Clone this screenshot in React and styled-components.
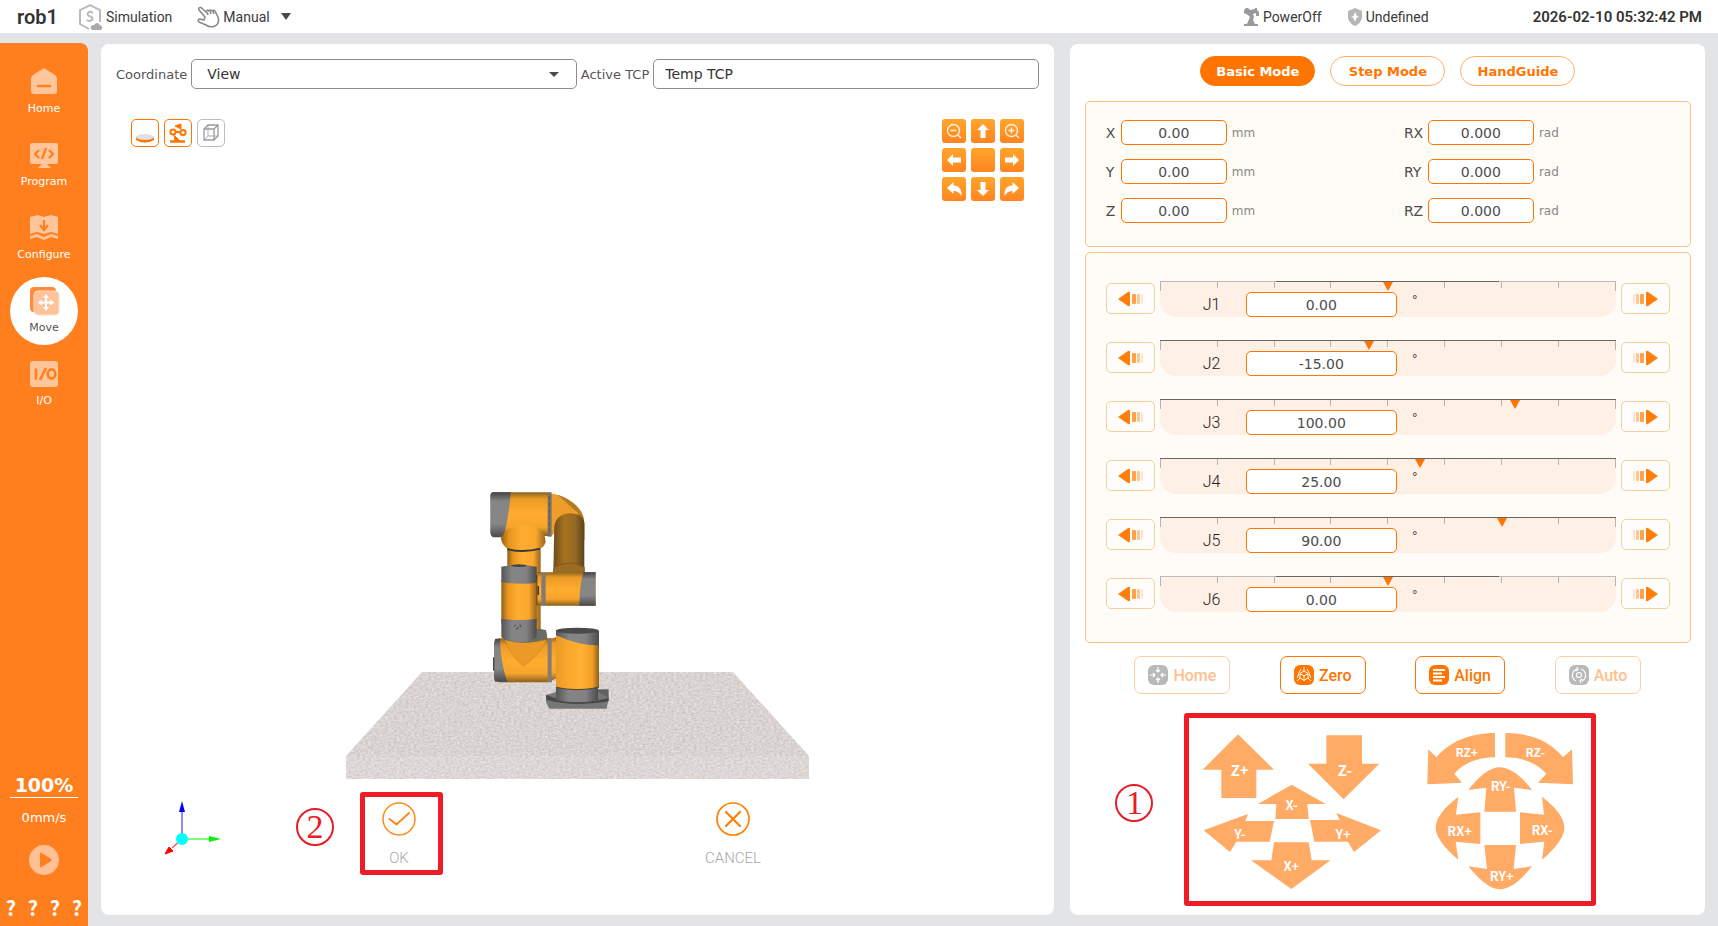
import React from "react";
import styled, { createGlobalStyle, css } from "styled-components";

const GlobalStyle = createGlobalStyle`
  * {
    box-sizing: border-box;
  }
  body {
    margin: 0;
    background-color: #e3e4e6;
    font-family: "DejaVu Sans", sans-serif;
    color: #4d4d4d;
  }
  button, input, select {
    font-family: inherit;
    margin: 0;
  }
  button {
    cursor: pointer;
  }
  svg {
    display: block;
  }
`;

const Page = styled.div`
  min-height: 100vh;
  display: flex;
  flex-direction: column;
  gap: 10px;
`;

/* top bar */

const TopBar = styled.header`
  height: 33px;
  flex-shrink: 0;
  background-color: white;
  display: flex;
  align-items: center;
  padding: 0 16px;
  font-family: Roboto, sans-serif;
  font-size: 14px;
  color: #3a3a3a;
`;

const RobotName = styled.h1`
  margin: 0 20px 0 1px;
  font-size: 20px;
  line-height: 24px;
  font-weight: 600;
  color: #333;
`;

const Status = styled.div`
  display: flex;
  align-items: center;
  gap: ${(p) => p.$gap || 3}px;
  margin-right: ${(p) => p.$after || 0}px;
`;

const ModeButton = styled.button`
  border: none;
  background: none;
  padding: 0;
  display: flex;
  align-items: center;
  gap: 3px;
  font-size: 14px;
  color: inherit;
`;

const ModeArrow = styled.span`
  margin-left: 8px;
  border: 5px solid transparent;
  border-top: 7px solid #4a4a4a;
  border-bottom: none;
`;

const StatusGroup = styled.div`
  display: flex;
  align-items: center;
  margin-left: auto;
`;

const Clock = styled.time`
  font-size: 15px;
  font-weight: 600;
  color: #333;
`;

/* side bar */

const Body = styled.div`
  flex: 1;
  display: flex;
`;

const SideBar = styled.aside`
  width: 88px;
  flex-shrink: 0;
  background-color: #ff7f1e;
  border-top-right-radius: 8px;
  padding: 15px 0 6px;
  display: flex;
  flex-direction: column;
  align-items: center;
  color: white;
`;

const Nav = styled.nav`
  display: flex;
  flex-direction: column;
  gap: 5px;
`;

const NavItem = styled.a`
  width: 68px;
  height: 68px;
  border-radius: 50%;
  padding-top: 10px;
  display: flex;
  flex-direction: column;
  align-items: center;
  gap: 6px;
  font-size: 11px;
  line-height: 16px;
  color: ${(p) => (p.$active ? "#555" : "white")};
  background-color: ${(p) => (p.$active ? "white" : "transparent")};
  text-decoration: none;
`;

const Speed = styled.div`
  width: 68px;
  margin-top: auto;
  border-bottom: 1px solid white;
  font-size: 19px;
  line-height: 24px;
  font-weight: bold;
  text-align: center;
`;

const Velocity = styled.div`
  margin-top: 10px;
  font-size: 13px;
  line-height: 20px;
`;

const PlayButton = styled.button`
  margin: 17px 0 21px;
  border: none;
  padding: 0;
  background: none;
`;

const Marks = styled.div`
  align-self: stretch;
  display: flex;
  justify-content: space-around;
  font-family: "Noto Sans CJK SC", sans-serif;
  font-size: 20px;
  line-height: 24px;
  font-weight: bold;
`;

/* panels */

const Main = styled.main`
  flex: 1;
  display: grid;
  grid-template-columns: 3fr 2fr;
  gap: 16px;
  padding: 1px 13px 11px;
`;

const Panel = styled.section`
  background-color: white;
  border-radius: 8px;
  display: flex;
  flex-direction: column;
  min-width: 0;
  padding: ${(p) => p.$pad};
`;

const FieldRow = styled.div`
  display: flex;
  align-items: center;
  gap: 4px;
  font-size: 13px;
  color: #555;
`;

const fieldBox = css`
  display: block;
  width: 100%;
  height: 30px;
  border: 1px solid #8e8e8e;
  border-radius: 5px;
  background-color: white;
  font-size: 14px;
  color: #333;
`;

const FieldWrap = styled.div`
  flex: 1;
  position: relative;
`;

const Select = styled.select`
  ${fieldBox}
  appearance: none;
  padding: 0 15px;
`;

const SelectArrow = styled.span`
  position: absolute;
  right: 18px;
  top: 13px;
  border: 5px solid transparent;
  border-top-color: #4a4a4a;
  border-bottom: none;
  pointer-events: none;
`;

const TextField = styled.input`
  ${fieldBox}
  padding: 0 11px;
`;

const ToolRow = styled.div`
  display: flex;
  justify-content: space-between;
  align-items: flex-start;
  padding: 30px 15px 0;
`;

const ViewTools = styled.div`
  display: flex;
  gap: 5px;
`;

const ViewTool = styled.button`
  width: 28px;
  height: 28px;
  padding: 0;
  display: grid;
  place-items: center;
  background-color: white;
  border: 1px solid ${(p) => (p.$on ? "#ff7500" : "#bdbdbd")};
  border-radius: 5px;
`;

const CameraPad = styled.div`
  display: grid;
  grid-template-columns: repeat(3, 24px);
  grid-auto-rows: 24px;
  gap: 5px;
`;

const CameraButton = styled.button`
  padding: 0;
  border: none;
  border-radius: 3px;
  background: linear-gradient(#ffa62b, #ff8420);
  display: grid;
  place-items: center;
`;

const Scene = styled.div`
  flex: 1;
  display: flex;
  align-items: flex-end;
  justify-content: center;
`;

const ConfirmRow = styled.div`
  display: flex;
  align-items: center;
  margin-top: 13px;
  padding-left: 48px;
`;

const Triad = styled.div`
  margin: 0 74px 12px 0;
`;

const StepNumber = styled.span`
  width: 38px;
  height: 38px;
  flex-shrink: 0;
  margin: 0 ${(p) => p.$after}px 14px 0;
  border: 2px solid #e81c24;
  border-radius: 50%;
  display: flex;
  justify-content: center;
  align-items: center;
  font-family: "Liberation Serif", serif;
  font-size: 34px;
  line-height: 34px;
  color: #e81c24;
`;

const Highlight = styled.div`
  border: 5px solid #ee1c25;
  border-radius: 3px;
  margin-right: ${(p) => p.$after || 0}px;
`;

const ConfirmButton = styled.button`
  width: 73px;
  height: 73px;
  border: none;
  padding: 5px 5px 0 0;
  background: none;
  display: flex;
  flex-direction: column;
  align-items: center;
  gap: 12px;
  font-family: Roboto, sans-serif;
  font-weight: 300;
  font-size: 15px;
  line-height: 20px;
  color: #a8a8a8;
`;

/* motion panel */

const Tabs = styled.div`
  display: flex;
  justify-content: center;
  gap: 15px;
`;

const Tab = styled.button`
  width: 115px;
  height: 30px;
  padding: 0;
  border: 1px solid ${(p) => (p.$active ? "#ff7500" : "#ffae69")};
  border-radius: 15px;
  background-color: ${(p) => (p.$active ? "#ff7500" : "white")};
  color: ${(p) => (p.$active ? "white" : "#ff7500")};
  font-size: 13px;
  font-weight: bold;
`;

const Card = styled.div`
  background-color: #fffbf7;
  border: 1px solid #ffc08a;
  border-radius: 5px;
  margin-top: ${(p) => p.$top}px;
  padding: ${(p) => p.$pad};
`;

const PoseGrid = styled.div`
  display: grid;
  grid-template-columns: 1fr 1fr;
  gap: 14px 12px;
`;

const PoseField = styled.label`
  display: flex;
  align-items: center;
  gap: 5px;
  font-size: 14px;
`;

const AxisName = styled.span`
  width: ${(p) => (p.$wide ? 19 : 10)}px;
`;

const Value = styled.input`
  width: ${(p) => p.$width}px;
  height: 25px;
  padding: 0;
  border: 1px solid #ff7500;
  border-radius: 5px;
  background-color: white;
  text-align: center;
  font-size: 14px;
  color: #4d4d4d;
`;

const Unit = styled.span`
  font-size: 12px;
  color: #888;
`;

const Joints = styled.div`
  display: flex;
  flex-direction: column;
  gap: 23px;
`;

const JointRow = styled.div`
  display: flex;
  gap: 5px;
`;

const JogStep = styled.button`
  width: 49px;
  height: 31px;
  margin-top: 2px;
  padding: 0;
  display: grid;
  place-items: center;
  border: 1px solid #f5cfa0;
  border-radius: 5px;
  background-color: #fffdfb;
`;

const Track = styled.div`
  flex: 1;
  height: 36px;
  position: relative;
  display: flex;
  align-items: flex-end;
  border-top: 1px solid #bcbcbc;
  border-radius: 0 0 16px 16px;
  background-color: #fff0e6;
`;

const Range = styled.span`
  position: absolute;
  top: -1px;
  height: 1px;
  background-color: #666;
`;

const Tick = styled.span`
  position: absolute;
  top: 0;
  width: 1px;
  height: ${(p) => (p.$end ? 9 : 6)}px;
  background-color: #b4b4b4;
`;

const Pointer = styled.span`
  position: absolute;
  top: 0;
  margin-left: -5px;
  border: 5px solid transparent;
  border-top: 9px solid #ff7500;
  border-bottom: none;
`;

const JointName = styled.label`
  width: 86px;
  padding-left: 43px;
  font-family: Roboto, sans-serif;
  font-size: 16px;
  font-weight: 300;
  line-height: 24px;
  color: #222;
`;

const Degree = styled.span`
  align-self: center;
  margin-left: 15px;
  font-size: 12px;
`;

const Actions = styled.div`
  display: flex;
  justify-content: space-evenly;
  margin-top: 13px;
`;

const ActionButton = styled.button`
  height: 38px;
  padding: 0 13px;
  display: flex;
  align-items: center;
  gap: 5px;
  border: 1px solid #ff7500;
  border-radius: 7px;
  background-color: white;
  color: #ff7500;
  font-family: Roboto, sans-serif;
  font-size: 16px;
  font-weight: 500;
  &:disabled {
    border-color: #ffcba0;
    color: #ffc08e;
  }
`;

const JogArea = styled.div`
  display: flex;
  align-items: center;
  justify-content: center;
  margin-top: 19px;
  padding-right: 64px;
`;

const JogPad = styled.div`
  position: relative;
  width: 402px;
  height: 183px;
`;

const JogArrow = styled.button`
  position: absolute;
  left: ${(p) => p.$box[0]}px;
  top: ${(p) => p.$box[1]}px;
  width: ${(p) => p.$box[2]}px;
  height: ${(p) => p.$box[3]}px;
  padding: 0;
  border: none;
  background: none;
  svg {
    overflow: visible;
  }
  path {
    fill: #ffab66;
  }
  text {
    fill: white;
    font-family: "Noto Sans CJK SC", sans-serif;
    font-weight: bold;
    text-anchor: middle;
  }
`;

const navItems = [
  {
    name: "Home",
    icon: (
      <>
        <path d="M13 0L24 7Q26 9 26 11V23Q26 26 23 26H3Q0 26 0 23V11Q0 9 2 7Z" fill="#ffc59b" />
        <path d="M7 18H19" stroke="#ff7f1e" strokeWidth="2.4" strokeLinecap="round" />
      </>
    ),
  },
  {
    name: "Program",
    icon: (
      <>
        <path d="M2 2H25Q27 2 27 4V21Q27 23 25 23H16L20 27H7L11 23H1Q-1 23 -1 21V4Q-1 2 2 2Z" fill="#ffc59b" />
        <path d="M8 9L4 13L8 17M18 9L22 13L18 17M15 7L11 18" fill="none" stroke="#ff7f1e" strokeWidth="2.2" />
      </>
    ),
  },
  {
    name: "Configure",
    icon: (
      <>
        <path d="M-1 3L7 1L13 3L20 1L27 3V20L20 18L13 20L6 18L-1 20ZM-1 22L6 20L13 23L20 20L27 22V25L20 23L13 26L6 23L-1 25Z" fill="#ffc59b" />
        <path d="M13 6V15M9 11L13 16L17 11" fill="none" stroke="#ff7f1e" strokeWidth="2.2" />
      </>
    ),
  },
  {
    name: "Move",
    icon: (
      <>
        <rect x="-1" y="0" width="26" height="25" rx="4" fill="#ff8c3a" />
        <rect x="3" y="4" width="25" height="24" rx="4" fill="#ffc39a" stroke="#ffe0cb" />
        <path d="M15 9V22M8 15.500H22" stroke="white" strokeWidth="2" />
        <path d="M15 7L18 11H12ZM15 24L18 20H12ZM7 15.500L11 12.500V18.500ZM23.500 15.500L19 12.500V18.500Z" fill="white" />
      </>
    ),
  },
  {
    name: "I/O",
    icon: (
      <>
        <rect x="-1" y="1" width="28" height="26" rx="3" fill="#ffc59b" />
        <path d="M5 8.500V19.500M9 20L15 8" stroke="#ff7f1e" strokeWidth="2.6" />
        <ellipse cx="20.500" cy="14" rx="3.800" ry="4.600" fill="none" stroke="#ff7f1e" strokeWidth="2.6" />
      </>
    ),
  },
];

const straight = "M12 5L18 11H14.5V19H9.500V11H6Z";
const curved = "M5 11L11.500 5V8.500C17 8.500 20 12 19.500 19C17.500 15.500 15 14 11.500 14V17Z";

const zoomGlass = (plus) => (
  <g fill="none" stroke="#fff1df" strokeWidth="1.4">
    <circle cx="11.500" cy="11.500" r="6" />
    <path d={plus ? "M8.500 11.500H14.500M11.500 8.500V14.500M16 16L19 19" : "M8.500 11.500H14.500M16 16L19 19"} />
  </g>
);

const cameraButtons = [
  { name: "Zoom out", icon: zoomGlass(false) },
  { name: "Up", icon: <path d={straight} fill="white" /> },
  { name: "Zoom in", icon: zoomGlass(true) },
  { name: "Left", icon: <path d={straight} fill="white" transform="rotate(-90 12 12)" /> },
  { name: "Center", icon: null },
  { name: "Right", icon: <path d={straight} fill="white" transform="rotate(90 12 12)" /> },
  { name: "Rotate left", icon: <path d={curved} fill="white" /> },
  { name: "Down", icon: <path d={straight} fill="white" transform="rotate(180 12 12)" /> },
  { name: "Rotate right", icon: <path d={curved} fill="white" transform="matrix(-1 0 0 1 24 0)" /> },
];

const pose = [
  { axis: "X", value: "0.00", unit: "mm" },
  { axis: "RX", value: "0.000", unit: "rad" },
  { axis: "Y", value: "0.00", unit: "mm" },
  { axis: "RY", value: "0.000", unit: "rad" },
  { axis: "Z", value: "0.00", unit: "mm" },
  { axis: "RZ", value: "0.000", unit: "rad" },
];

// angle range of the scale is -180..180, limit is the reachable part of it
const joints = [
  { name: "J1", angle: 0, limit: 88 },
  { name: "J2", angle: -15, limit: 180 },
  { name: "J3", angle: 100, limit: 180 },
  { name: "J4", angle: 25, limit: 180 },
  { name: "J5", angle: 90, limit: 180 },
  { name: "J6", angle: 0, limit: 88 },
];

const actions = [
  {
    name: "Home",
    disabled: true,
    icon: <path d="M10 2V7M10 13V18M2 10H7M13 10H18M8 5L10 7L12 5M8 15L10 13L12 15M5 8L7 10L5 12M15 8L13 10L15 12" />,
  },
  {
    name: "Zero",
    icon: <path d="M10 6L14 8.500V13L10 15.500L6 13V8.500ZM6 8.500L10 11L14 8.500M10 11V15.500M10 2V6M6 13L3 16M14 13L17 16M7 4Q4 8 3.500 13M13 4Q16 8 16.500 13" strokeWidth="1" />,
  },
  {
    name: "Align",
    icon: <path d="M4 5H16M4 8.500H13M4 12H16M4 15.500H13" strokeWidth="1.8" />,
  },
  {
    name: "Auto",
    disabled: true,
    icon: <path d="M8 4A6.500 6.500 0 0 0 7 16M12 4A6.500 6.500 0 0 1 13 16M8 2L9 4.500L6.500 6M12 18L11 15.500L13.500 14M10 7.500A2.500 2.500 0 1 0 10 12.500A2.500 2.500 0 1 0 10 7.500" />,
  },
];

const jogArrows = [
  { name: "Z+", box: [13, 16, 73, 65], at: [421, 209], size: 45, d: "M416 102L524 208H471V293H366V208H310Z" },
  { name: "Z-", box: [119, 17, 72, 65], at: [737, 209], size: 45, d: "M681 105H788V190H840L733 297L626 190H681Z" },
  { name: "X-", box: [69, 66, 68, 35], at: [577, 316], size: 39, d: "M577 253L679 311H624L628 356H528L531 311H476Z" },
  { name: "Y-", box: [14, 96, 71, 38], at: [422, 403], size: 39, d: "M313 390L446 341L438 362H524L511 424H411L392 455Z" },
  { name: "Y+", box: [121, 95, 71, 39], at: [731, 401], size: 39, d: "M845 390L711 338L721 359H632L645 424H746L764 455Z" },
  { name: "X+", box: [62, 124, 80, 47], at: [576, 498], size: 39, d: "M524 426H628L637 480H694L576 566L455 480H516Z" },
  { name: "RZ+", box: [238, 15, 68, 52], at: [1102, 157], size: 36, d: "M1187 98V171C1135 171 1090 190 1065 220L1088 247L984 252L987 147L1011 171C1050 125 1110 98 1187 98Z" },
  { name: "RZ-", box: [316, 15, 68, 52], at: [1308, 157], size: 36, d: "M1218 98V171C1270 171 1315 190 1341 220L1316 247L1421 252L1418 147L1391 171C1355 125 1295 98 1218 98Z" },
  { name: "RY-", box: [279, 49, 64, 45], at: [1204, 258], size: 39, d: "M1107 269C1140 225 1175 201 1200 201C1230 201 1265 225 1298 269L1244 262L1250 334H1155L1161 262Z" },
  { name: "RY+", box: [279, 127, 64, 45], at: [1207, 528], size: 39, d: "M1155 434H1250L1243 506L1298 498C1265 540 1230 567 1200 567C1175 567 1140 540 1107 498L1163 506Z" },
  { name: "RX+", box: [246, 78, 46, 64], at: [1081, 393], size: 39, d: "M1077 289L1070 343L1143 336V431L1069 424L1077 478C1030 440 1009 405 1009 384C1009 355 1030 325 1077 289Z" },
  { name: "RX-", box: [331, 78, 45, 64], at: [1328, 391], size: 39, d: "M1328 289L1334 343L1262 336V431L1335 424L1328 478C1375 440 1395 405 1395 384C1395 355 1375 325 1328 289Z" },
];

const RobotScene = () => (
  <svg width="463" height="288" viewBox="346 491 463 288" role="img" aria-label="Robot view">
    <defs>
      <linearGradient id="oh">
        <stop offset="0" stopColor="#8f6016" />
        <stop offset="0.180" stopColor="#e8951f" />
        <stop offset="0.450" stopColor="#ffad30" />
        <stop offset="0.780" stopColor="#fba62c" />
        <stop offset="1" stopColor="#96651a" />
      </linearGradient>
      <linearGradient id="base">
        <stop offset="0" stopColor="#e99a28" />
        <stop offset="0.300" stopColor="#fba82d" />
        <stop offset="0.600" stopColor="#ffb034" />
        <stop offset="0.850" stopColor="#f09d28" />
        <stop offset="1" stopColor="#8a5e1a" />
      </linearGradient>
      <linearGradient id="ov" x2="0" y2="1">
        <stop offset="0" stopColor="#8d6220" />
        <stop offset="0.150" stopColor="#eb9a24" />
        <stop offset="0.500" stopColor="#ffac30" />
        <stop offset="0.800" stopColor="#f7a42c" />
        <stop offset="1" stopColor="#8a5f1e" />
      </linearGradient>
      <linearGradient id="gh">
        <stop offset="0" stopColor="#555" />
        <stop offset="0.300" stopColor="#858585" />
        <stop offset="0.700" stopColor="#828282" />
        <stop offset="1" stopColor="#4c4c4c" />
      </linearGradient>
      <linearGradient id="gv" x2="0" y2="1">
        <stop offset="0" stopColor="#444" />
        <stop offset="0.200" stopColor="#858585" />
        <stop offset="0.700" stopColor="#868686" />
        <stop offset="1" stopColor="#4a4a4a" />
      </linearGradient>
      <linearGradient id="dark">
        <stop offset="0" stopColor="#6b4c1c" />
        <stop offset="0.350" stopColor="#a8721f" />
        <stop offset="0.700" stopColor="#966a21" />
        <stop offset="1" stopColor="#5a431f" />
      </linearGradient>
      <filter id="stone" x="0" y="0" width="1" height="1" colorInterpolationFilters="sRGB">
        <feTurbulence type="fractalNoise" baseFrequency="0.350 0.550" numOctaves="3" seed="4" />
        <feColorMatrix values="0.200 0 0 0 0.750  0.200 0 0 0 0.730  0.200 0 0 0 0.720  0 0 0 0 1" />
        <feComposite in2="SourceGraphic" operator="in" />
      </filter>
    </defs>
    <path d="M422 672H733L809 756V779H346V756Z" fill="#d9d4d1" filter="url(#stone)" />
    <path d="M346 756H809V779H346Z" fill="#fff" opacity="0.100" />
    <g transform="translate(470 480) scale(0.3333)">
      <path d="M112 190H212V470H112Z" fill="url(#oh)" />
      <path d="M240 40C290 46 343 84 343 130V180H256V158L240 170Z" fill="#ee9d2a" />
      <path d="M262 44C310 60 343 90 343 130V180H325V100Z" fill="#b47b25" />
      <path d="M253 140Q258 104 298 100Q340 100 343 130V277H250Z" fill="url(#dark)" />
      <path d="M253 262Q298 236 343 262V277H250Z" fill="#9b6c22" stroke="#6e5024" strokeWidth="2" />
      <path d="M68 37H243V168H68Q62 165 62 158V46Q62 38 68 37Z" fill="url(#ov)" />
      <path d="M68 37H122Q118 105 100 172H68Q61 165 61 158V46Q61 38 68 37Z" fill="url(#gv)" />
      <path d="M233 38H245V170H233Z" fill="#7b746c" />
      <path d="M238 48V166" stroke="#4e4942" strokeWidth="2" strokeDasharray="14 5" />
      <path d="M105 155Q165 120 222 155L227 185Q224 200 207 208Q160 216 115 208Q94 195 93 175Z" fill="url(#oh)" />
      <path d="M112 207Q160 220 210 206" stroke="#3c3a38" strokeWidth="6" fill="none" />
      <path d="M200 277H377V377H200Z" fill="url(#ov)" />
      <path d="M340 277H377V377H328Q328 320 340 277Z" fill="url(#gv)" />
      <path d="M216 278H227V376H214V300Z" fill="#827a71" />
      <path d="M200 285V375M205 318V345" stroke="#3c3326" strokeWidth="4" />
      <path d="M94 300H200V430H94Z" fill="url(#oh)" />
      <path d="M94 260Q147 250 200 260V308Q147 316 94 306Z" fill="url(#gh)" />
      <ellipse cx="147" cy="257" rx="24" ry="4" fill="#444" />
      <path d="M108 482L204 446L228 452L232 480Q170 500 108 482Z" fill="url(#gh)" />
      <path d="M85 475H245V607H85Z" fill="url(#ov)" />
      <path d="M105 480Q170 496 230 480Q200 535 160 557Q130 540 105 480Z" fill="#eb9a27" />
      <path d="M105 482Q130 540 160 557Q195 540 230 482" fill="none" stroke="#a87322" strokeWidth="2" opacity="0.500" />
      <path d="M100 472L204 446L228 450L232 474Q170 500 100 478Z" fill="#6c6a67" />
      <path d="M94 416Q147 424 200 416V470Q190 485 147 487Q102 482 94 470Z" fill="url(#gh)" />
      <path d="M132 440L138 434M150 434L154 442M138 448L146 442" stroke="#444" strokeWidth="3" />
      <path d="M76 476H90Q92 550 112 605H76Q72 600 72 590V488Z" fill="url(#gv)" />
      <path d="M71 532V572" stroke="#444" strokeWidth="4" />
      <path d="M240 478L262 470V594L240 604Z" fill="url(#ov)" />
      <path d="M233 476H245V606H233Z" fill="#857c73" />
      <path d="M380 628H416V656H380Z" fill="#616161" />
      <path d="M228 645L258 636H384L416 654L410 686H238L228 666Z" fill="#767676" />
      <path d="M228 645Q320 680 416 654V664Q320 682 230 660Z" fill="#484848" />
      <path d="M258 615H384V660Q320 674 258 660Z" fill="url(#gh)" />
      <path d="M258 455H387V622Q320 636 258 622Z" fill="url(#base)" />
      <path d="M258 622Q320 636 387 622" fill="none" stroke="#4f4434" strokeWidth="3" />
      <path d="M258 452H387V496Q330 498 258 466Z" fill="url(#gh)" />
      <ellipse cx="322" cy="452" rx="64" ry="9" fill="#4a4a4a" />
    </g>
  </svg>
);

const AxisTriad = () => (
  <svg width="58" height="56" viewBox="164 800 58 56" aria-hidden="true">
    <path d="M182 839V810" stroke="#6a62ff" strokeWidth="1.500" />
    <path d="M182 801L185 812H179Z" fill="#0a00f0" />
    <path d="M182 839H210" stroke="#4cff4c" strokeWidth="1.500" />
    <path d="M221 839L209 836V842Z" fill="#00f500" />
    <path d="M182 839L172 848" stroke="#ff5a5a" strokeWidth="1.500" />
    <path d="M165 854L169 847L173 851Z" fill="#f00" stroke="#f00" />
    <circle cx="182" cy="839" r="6" fill="#00ffff" />
  </svg>
);

const StepIcon = ({ flip }) => (
  <svg width="27" height="16" viewBox="0 0 27 16" aria-hidden="true">
    <g transform={flip ? "matrix(-1 0 0 1 27 0)" : undefined}>
      <path d="M1 8L11 1Q13 0 13 2V14Q13 16 11 15Z" fill="#ff7f0a" />
      <rect x="15" y="3" width="4" height="10" rx="1" fill="#ffa04a" />
      <rect x="20" y="3" width="3" height="10" rx="1" fill="#ffc692" />
      <rect x="24" y="3" width="2" height="10" rx="1" fill="#ffe3ca" />
    </g>
  </svg>
);

const Joint = ({ joint }) => {
  const toPercent = (angle) => ((angle + 180) / 360) * 100;
  return (
    <JointRow>
      <JogStep aria-label={`${joint.name} minus`}>
        <StepIcon />
      </JogStep>
      <Track>
        <Range
          style={{
            left: `${toPercent(-joint.limit)}%`,
            right: `${100 - toPercent(joint.limit)}%`,
          }}
        />
        {[0, 1, 2, 3, 4, 5, 6, 7, 8].map((n) => (
          <Tick key={n} $end={n % 8 === 0} style={{ left: `calc((100% - 1px) * ${n / 8})` }} />
        ))}
        <Pointer style={{ left: `${toPercent(joint.angle)}%` }} />
        <JointName htmlFor={joint.name}>{joint.name}</JointName>
        <Value id={joint.name} $width={151} defaultValue={joint.angle.toFixed(2)} />
        <Degree>°</Degree>
      </Track>
      <JogStep aria-label={`${joint.name} plus`}>
        <StepIcon flip />
      </JogStep>
    </JointRow>
  );
};

const App = () => {
  return (
    <Page>
      <GlobalStyle />
      <TopBar>
        <RobotName>rob1</RobotName>
        <Status $after={25}>
          <svg width="25" height="28" viewBox="0 0 25 28" fill="none" aria-hidden="true">
            <path d="M11 26L2 21V7L12 2L22 7V19" stroke="#bababa" strokeWidth="2" />
            <path d="M15 10Q13 8 11 9Q8 11 11 13Q15 14 14.500 16.500Q12 19 8.500 17" stroke="#bababa" strokeWidth="2" />
            <path d="M13 26Q12 22 16 22Q19 18 22 22Q26 24 23 27H14Z" fill="#a9a9a9" />
          </svg>
          Simulation
        </Status>
        <ModeButton>
          <svg width="23" height="22" viewBox="0 0 23 22" fill="none" stroke="#8a8a8a" strokeWidth="1.600" strokeLinejoin="round" aria-hidden="true">
            <path d="M8 11L2 4Q1 1 4 1.500L9 6Q10 3 12 5Q13 3 15 5Q17 3 18.500 6L21 11Q23 17 18 20Q13 22 9 19L2 16Q0 14 2.500 13L7 14Z" />
            <path d="M10 6L11 9M13 5L14 8M16 5L17 8" />
          </svg>
          Manual
          <ModeArrow />
        </ModeButton>
        <StatusGroup>
          <Status $after={26} $gap={3}>
            <svg width="17" height="18" viewBox="0 0 17 18" aria-hidden="true">
              <path d="M1 16H15V18H1ZM4 16L7 9L5 7L1 5V2L3 0H5L7 2L12 1V0H14V2L16 4V8H13V5L10 6L11 9L10 12L12 16Z" fill="#9a9a9a" />
            </svg>
            PowerOff
          </Status>
          <Status $after={104} $gap={4}>
            <svg width="14" height="18" viewBox="0 0 14 18" aria-hidden="true">
              <path d="M7 0L14 3V10Q13 15 7 18Q1 15 0 10V3Z" fill="#b5b5b5" />
              <path d="M7 4L9 8L11 9L8.500 10L7 14L5.500 10L3 9L5.500 8Z" fill="white" />
            </svg>
            Undefined
          </Status>
          <Clock>2026-02-10 05:32:42 PM</Clock>
        </StatusGroup>
      </TopBar>
      <Body>
        <SideBar>
          <Nav>
            {navItems.map((item) => (
              <NavItem key={item.name} href="#" $active={item.name === "Move"}>
                <svg width="27" height="27" viewBox="0 0 27 27" overflow="visible" aria-hidden="true">
                  {item.icon}
                </svg>
                {item.name}
              </NavItem>
            ))}
          </Nav>
          <Speed>100%</Speed>
          <Velocity>0mm/s</Velocity>
          <PlayButton aria-label="Play">
            <svg width="30" height="30" viewBox="0 0 30 30">
              <circle cx="15" cy="15" r="15" fill="#ffc094" />
              <path d="M11 9Q11 7 13 8L22 14Q23 15 22 16L13 22Q11 23 11 21Z" fill="#ff7f1e" />
            </svg>
          </PlayButton>
          <Marks>
            <span>?</span>
            <span>?</span>
            <span>?</span>
            <span>?</span>
          </Marks>
        </SideBar>
        <Main>
          <Panel $pad="15px 15px 40px">
            <FieldRow>
              <label htmlFor="coordinate">Coordinate</label>
              <FieldWrap>
                <Select id="coordinate" defaultValue="View">
                  <option>View</option>
                </Select>
                <SelectArrow />
              </FieldWrap>
              <label htmlFor="tcp">Active TCP</label>
              <FieldWrap>
                <TextField id="tcp" defaultValue="Temp TCP" />
              </FieldWrap>
            </FieldRow>
            <ToolRow>
              <ViewTools>
                <ViewTool $on aria-label="Table">
                  <svg width="20" height="20" viewBox="0 0 20 20">
                    <path d="M1 14V17Q10 22 19 17V14Z" fill="#ff7500" />
                    <ellipse cx="10" cy="14" rx="9" ry="3" fill="#dfe0e3" />
                  </svg>
                </ViewTool>
                <ViewTool $on aria-label="Robot">
                  <svg width="20" height="20" viewBox="0 0 20 20" fill="none" stroke="#ff7500" strokeWidth="2">
                    <circle cx="5" cy="9" r="2.600" />
                    <circle cx="15" cy="9.500" r="2.600" />
                    <path d="M8 9H12" />
                    <path d="M13 1V6L7 3ZM6 12L12 18H7Z" fill="#ff7500" strokeWidth="1" />
                    <path d="M2 18.500H17" strokeWidth="2.500" />
                  </svg>
                </ViewTool>
                <ViewTool aria-label="Cube">
                  <svg width="18" height="18" viewBox="0 0 18 18" fill="none" stroke="#9b9b9b" strokeWidth="1.300">
                    <path d="M2 5H12V16H2ZM2 5L6 1H16V12L12 16M12 5L16 1" />
                    <path d="M6 1V12H16M2 16L6 12" strokeWidth="0.800" />
                  </svg>
                </ViewTool>
              </ViewTools>
              <CameraPad>
                {cameraButtons.map((b) => (
                  <CameraButton key={b.name} aria-label={b.name}>
                    <svg width="24" height="24" viewBox="0 0 24 24">
                      {b.icon}
                    </svg>
                  </CameraButton>
                ))}
              </CameraPad>
            </ToolRow>
            <Scene>
              <RobotScene />
            </Scene>
            <ConfirmRow>
              <Triad>
                <AxisTriad />
              </Triad>
              <StepNumber $after={26}>2</StepNumber>
              <Highlight $after={256}>
                <ConfirmButton>
                  <svg width="34" height="34" viewBox="0 0 34 34" fill="none" stroke="#ff8a14">
                    <circle cx="17" cy="17" r="16" strokeWidth="1.500" />
                    <path d="M7.500 17L14.500 22.500L27 11" strokeWidth="2" strokeLinecap="round" />
                  </svg>
                  OK
                </ConfirmButton>
              </Highlight>
              <ConfirmButton>
                <svg width="34" height="34" viewBox="0 0 34 34" fill="none" stroke="#ff8000">
                  <circle cx="17" cy="17" r="16" strokeWidth="1.700" />
                  <path d="M10 10L24 24M24 10L10 24" strokeWidth="2.200" strokeLinecap="round" />
                </svg>
                CANCEL
              </ConfirmButton>
            </ConfirmRow>
          </Panel>
          <Panel $pad="12px 14px 9px 15px">
            <Tabs>
              <Tab $active>Basic Mode</Tab>
              <Tab>Step Mode</Tab>
              <Tab>HandGuide</Tab>
            </Tabs>
            <Card $top={15} $pad="18px 0 23px 20px">
              <PoseGrid>
                {pose.map((p) => (
                  <PoseField key={p.axis}>
                    <AxisName $wide={p.axis.length > 1}>{p.axis}</AxisName>
                    <Value $width={106} defaultValue={p.value} />
                    <Unit>{p.unit}</Unit>
                  </PoseField>
                ))}
              </PoseGrid>
            </Card>
            <Card $top={5} $pad="28px 20px 30px">
              <Joints>
                {joints.map((joint) => (
                  <Joint key={joint.name} joint={joint} />
                ))}
              </Joints>
            </Card>
            <Actions>
              {actions.map((a) => (
                <ActionButton key={a.name} disabled={a.disabled}>
                  <svg width="20" height="20" viewBox="0 0 20 20" fill="none" stroke="white" strokeWidth="1.200" aria-hidden="true">
                    <rect width="20" height="20" rx="6" stroke="none" fill={a.disabled ? "#b9b9b9" : "#ff7500"} />
                    {a.icon}
                  </svg>
                  {a.name}
                </ActionButton>
              ))}
            </Actions>
            <JogArea>
              <StepNumber $after={31}>1</StepNumber>
              <Highlight>
                <JogPad>
                  {jogArrows.map(({ name, box, at, size, d }) => (
                    <JogArrow key={name} $box={box}>
                      <svg
                        width={box[2]}
                        height={box[3]}
                        viewBox={`${box[0] * 3 + 269} ${box[1] * 3 + 53} ${box[2] * 3} ${box[3] * 3}`}
                      >
                        <path d={d} />
                        <text x={at[0]} y={at[1] + size * 0.37} fontSize={size}>
                          {name}
                        </text>
                      </svg>
                    </JogArrow>
                  ))}
                </JogPad>
              </Highlight>
            </JogArea>
          </Panel>
        </Main>
      </Body>
    </Page>
  );
};

export default App;
